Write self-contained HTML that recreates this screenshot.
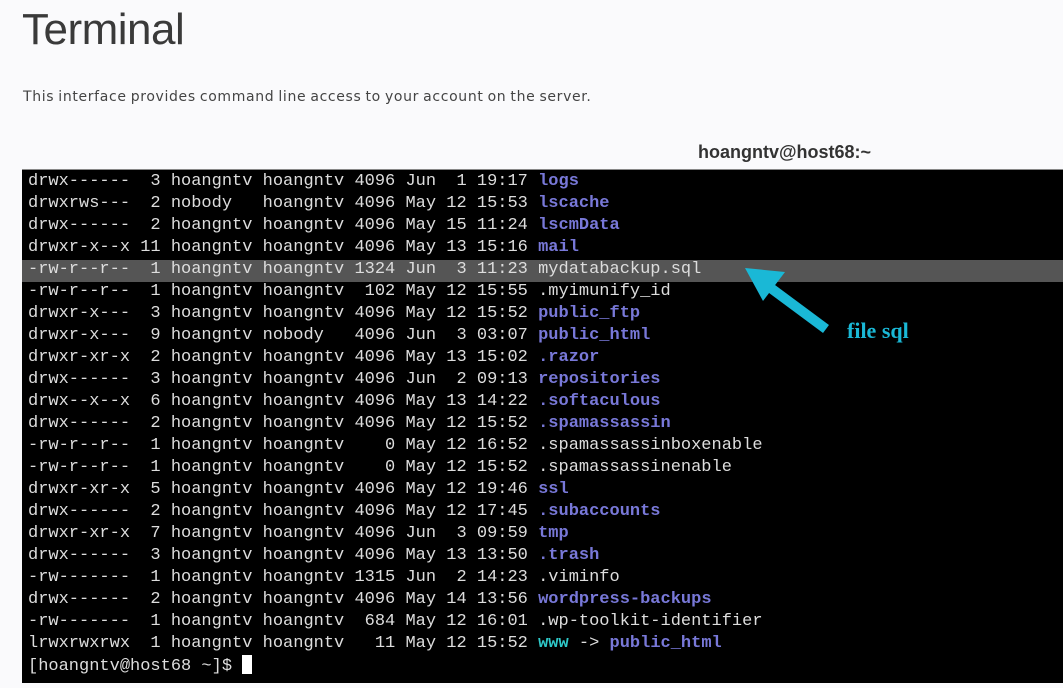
<!DOCTYPE html>
<html><head><meta charset="utf-8"><style>
html,body{margin:0;padding:0;}
body{width:1063px;height:688px;background:#fafafc;position:relative;overflow:hidden;font-family:"Liberation Sans",sans-serif;}
h1{position:absolute;left:22px;top:5px;margin:0;font-weight:normal;font-size:44px;color:#3a3a3a;letter-spacing:-0.5px;}
.desc{position:absolute;left:23px;top:89px;font-family:"DejaVu Sans",sans-serif;font-size:14px;color:#444;letter-spacing:0.65px;word-spacing:-1px;}
.host{position:absolute;left:698px;top:142px;font-size:18px;font-weight:bold;color:#333;}
.term{position:absolute;left:22px;top:169px;width:1041px;height:513px;background:#000;border-top:1px solid #888;}
.hl{position:absolute;left:22px;top:260px;width:1041px;height:22px;background:#555;}
pre{position:absolute;left:28px;top:171px;margin:0;font-family:"Liberation Mono",monospace;font-size:17px;line-height:22px;color:#ddd;}
.b{color:#7878d8;font-weight:bold;}
.c{color:#2ec8c8;font-weight:bold;}
.cur{display:inline-block;width:10px;height:19px;background:#fff;vertical-align:-4px;}
.lbl{position:absolute;left:847px;top:318px;font-family:"Liberation Serif",serif;font-weight:bold;font-size:22px;color:#1ab8d6;}
</style></head><body>
<h1>Terminal</h1>
<div class="desc">This interface provides command line access to your account on the server.</div>
<div class="host">hoangntv@host68:~</div>
<div class="term"></div>
<div class="hl"></div>
<pre>drwx------  3 hoangntv hoangntv 4096 Jun  1 19:17 <span class="b">logs</span>
drwxrws---  2 nobody   hoangntv 4096 May 12 15:53 <span class="b">lscache</span>
drwx------  2 hoangntv hoangntv 4096 May 15 11:24 <span class="b">lscmData</span>
drwxr-x--x 11 hoangntv hoangntv 4096 May 13 15:16 <span class="b">mail</span>
-rw-r--r--  1 hoangntv hoangntv 1324 Jun  3 11:23 mydatabackup.sql
-rw-r--r--  1 hoangntv hoangntv  102 May 12 15:55 .myimunify_id
drwxr-x---  3 hoangntv hoangntv 4096 May 12 15:52 <span class="b">public_ftp</span>
drwxr-x---  9 hoangntv nobody   4096 Jun  3 03:07 <span class="b">public_html</span>
drwxr-xr-x  2 hoangntv hoangntv 4096 May 13 15:02 <span class="b">.razor</span>
drwx------  3 hoangntv hoangntv 4096 Jun  2 09:13 <span class="b">repositories</span>
drwx--x--x  6 hoangntv hoangntv 4096 May 13 14:22 <span class="b">.softaculous</span>
drwx------  2 hoangntv hoangntv 4096 May 12 15:52 <span class="b">.spamassassin</span>
-rw-r--r--  1 hoangntv hoangntv    0 May 12 16:52 .spamassassinboxenable
-rw-r--r--  1 hoangntv hoangntv    0 May 12 15:52 .spamassassinenable
drwxr-xr-x  5 hoangntv hoangntv 4096 May 12 19:46 <span class="b">ssl</span>
drwx------  2 hoangntv hoangntv 4096 May 12 17:45 <span class="b">.subaccounts</span>
drwxr-xr-x  7 hoangntv hoangntv 4096 Jun  3 09:59 <span class="b">tmp</span>
drwx------  3 hoangntv hoangntv 4096 May 13 13:50 <span class="b">.trash</span>
-rw-------  1 hoangntv hoangntv 1315 Jun  2 14:23 .viminfo
drwx------  2 hoangntv hoangntv 4096 May 14 13:56 <span class="b">wordpress-backups</span>
-rw-------  1 hoangntv hoangntv  684 May 12 16:01 .wp-toolkit-identifier
lrwxrwxrwx  1 hoangntv hoangntv   11 May 12 15:52 <span class="c">www</span> -&gt; <span class="b">public_html</span>
[hoangntv@host68 ~]$ <span class="cur"></span></pre>
<svg style="position:absolute;left:0;top:0" width="1063" height="688">
<line x1="826" y1="329" x2="768" y2="286" stroke="#1ab8d6" stroke-width="10"/>
<polygon points="745,268 785,272 763,301" fill="#1ab8d6"/>
</svg>
<div class="lbl">file sql</div>
</body></html>
